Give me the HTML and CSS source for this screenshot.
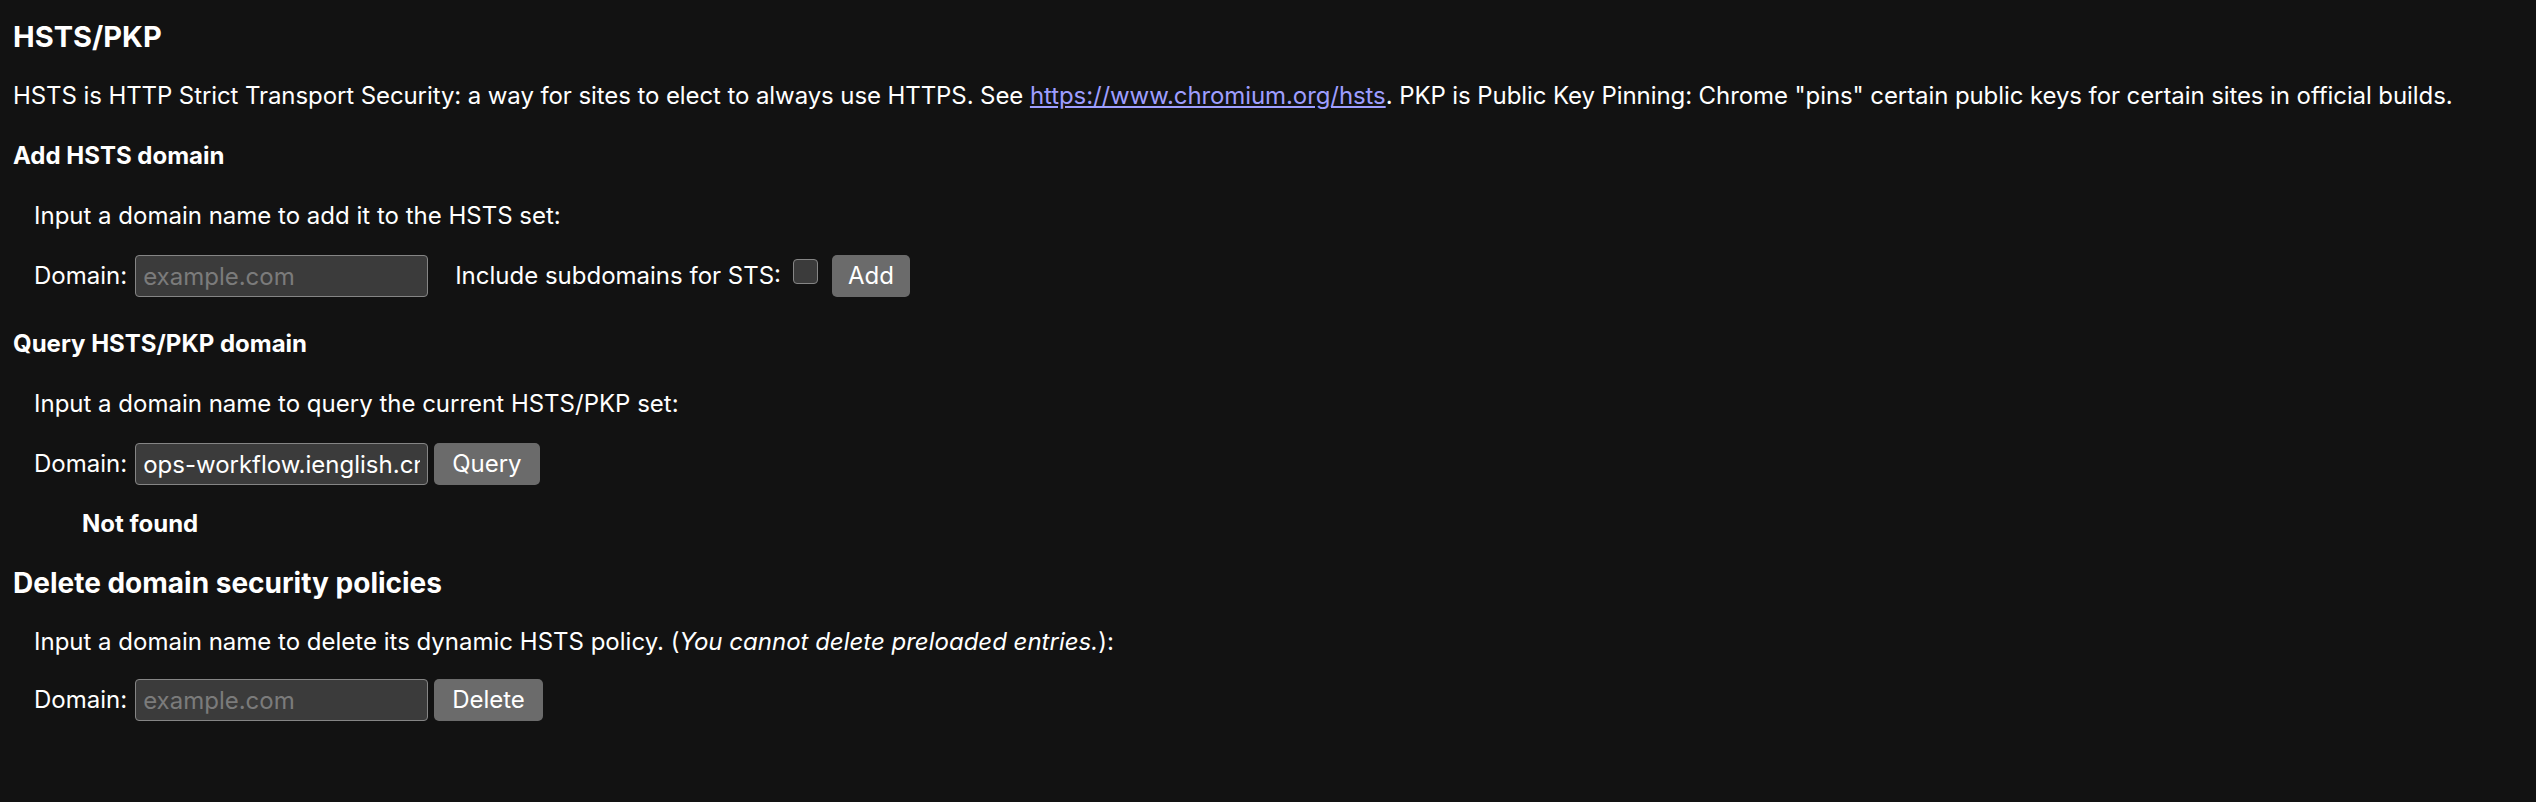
FILE: index.html
```html
<!DOCTYPE html>
<html lang="en">
<head>
<meta charset="utf-8">
<title>HSTS/PKP</title>
<link rel="stylesheet" href="styles.css">
</head>
<body>
<main class="page">
  <h2 class="title">HSTS/PKP</h2>
  <p class="intro">HSTS is HTTP Strict Transport Security: a way for sites to elect to always use HTTPS. See <a class="link" href="#">https://www.chromium.org/hsts</a>. PKP is Public Key Pinning: Chrome "pins" certain public keys for certain sites in official builds.</p>

  <section class="section">
    <h4 class="heading">Add HSTS domain</h4>
    <p class="desc">Input a domain name to add it to the HSTS set:</p>
    <form class="row">
      <span class="label">Domain:</span>
      <input class="field" type="text" placeholder="example.com">
      <span class="label label-sub">Include subdomains for STS:</span>
      <input class="check" type="checkbox">
      <button class="btn btn-add" type="button">Add</button>
    </form>
  </section>

  <section class="section">
    <h4 class="heading heading-query">Query HSTS/PKP domain</h4>
    <p class="desc">Input a domain name to query the current HSTS/PKP set:</p>
    <form class="row">
      <span class="label">Domain:</span>
      <input class="field" type="text" value="ops-workflow.ienglish.cn">
      <button class="btn btn-query" type="button">Query</button>
    </form>
    <div class="result">Not found</div>
  </section>

  <section class="section">
    <h3 class="heading heading-delete">Delete domain security policies</h3>
    <p class="desc desc-delete">Input a domain name to delete its dynamic HSTS policy. (<i>You cannot delete preloaded entries.</i>):</p>
    <form class="row row-delete">
      <span class="label">Domain:</span>
      <input class="field" type="text" placeholder="example.com">
      <button class="btn btn-query" type="button">Delete</button>
    </form>
  </section>
</main>
</body>
</html>
```

FILE: styles.css
```css
html, body {
  margin: 0;
  padding: 0;
  background: #121212;
}

body {
  color: #ffffff;
  font-family: Inter, "Noto Sans", "Liberation Sans", sans-serif;
  font-size: 24px;
  line-height: 36px;
}

.page {
  padding: 19px 14px 40px 13px;
}

.title {
  margin: 0;
  font-size: 29px;
  line-height: 36px;
  font-weight: 700;
}

.intro {
  margin: 23px 0 0;
  white-space: nowrap;
  letter-spacing: -0.09px;
}

.link {
  color: #9e9eff;
  text-decoration: underline;
}

.section {
  margin: 0;
}

.heading {
  margin: 24px 0 0;
  font-size: 24px;
  line-height: 36px;
  font-weight: 700;
}

.heading-query {
  margin-top: 29px;
}

.heading-delete {
  margin-top: 23px;
  font-size: 28px;
}

.desc {
  margin: 24px 0 0 21px;
}

.desc-delete {
  margin-top: 23px;
}

.row {
  display: flex;
  align-items: center;
  height: 42px;
  margin: 21px 0 0 21px;
}

.row-delete {
  margin-top: 19px;
}

.label {
  white-space: nowrap;
}

.field {
  box-sizing: border-box;
  width: 293px;
  height: 42px;
  margin: 0 0 0 8px;
  padding: 0 7px;
  background: #3b3b3b;
  color: #ffffff;
  border: 1.5px solid #858585;
  border-radius: 4px;
  font-family: inherit;
  font-size: 24px;
  outline: none;
}

.field::placeholder {
  color: #7b7b7b;
}

.label-sub {
  margin-left: 27px;
}

.check {
  appearance: none;
  -webkit-appearance: none;
  box-sizing: border-box;
  width: 25px;
  height: 25px;
  margin: 0 0 0 12px;
  align-self: flex-start;
  margin-top: 4px;
  background: #3b3b3b;
  border: 1.5px solid #858585;
  border-radius: 4px;
}

.btn {
  box-sizing: border-box;
  height: 42px;
  padding: 0 16px;
  background: #6b6b6b;
  color: #ffffff;
  border: none;
  border-radius: 5px;
  font-family: inherit;
  font-size: 24px;
  line-height: 42px;
}

.btn-add {
  margin-left: 14px;
}

.btn-query {
  margin-left: 6px;
  padding: 0 18px;
}

.result {
  margin: 21px 0 0 69px;
  font-weight: 700;
}
```
